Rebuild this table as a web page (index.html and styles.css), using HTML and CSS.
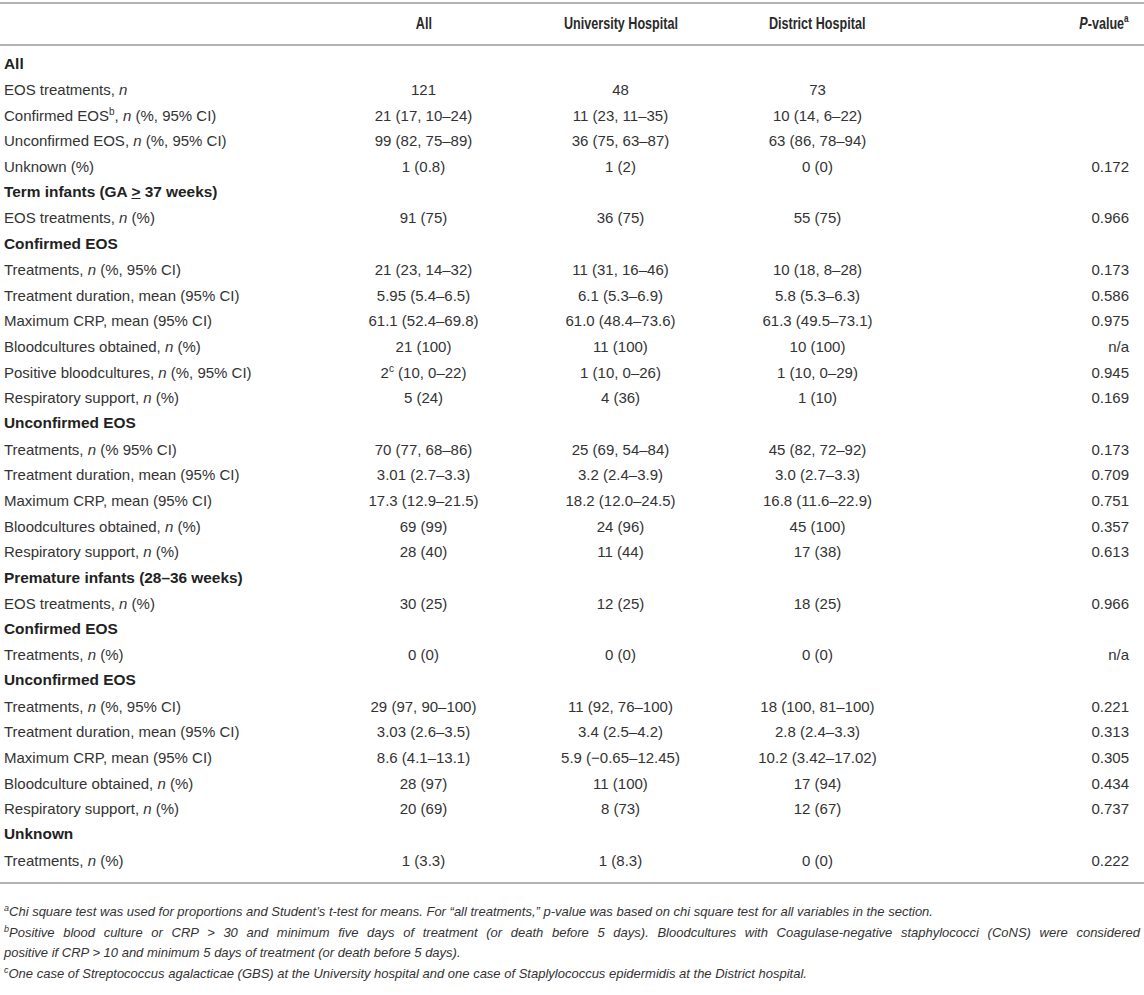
FILE: index.html
```html
<!DOCTYPE html>
<html>
<head>
<meta charset="utf-8">
<link rel="stylesheet" href="styles.css">
</head>
<body>
<div class="page">
<table class="data">
<colgroup>
<col class="c-label"><col class="c-num"><col class="c-num"><col class="c-num"><col class="c-p">
</colgroup>
<thead>
<tr><th></th><th><span class="hd">All</span></th><th><span class="hd">University Hospital</span></th><th><span class="hd">District Hospital</span></th><th class="p"><span class="hd hd-r"><i>P</i>-value<sup>a</sup></span></th></tr>
</thead>
<tbody>
<tr class="sec first"><td>All</td><td></td><td></td><td></td><td></td></tr>
<tr><td>EOS treatments, <i>n</i></td><td>121</td><td>48</td><td>73</td><td class="p"></td></tr>
<tr><td>Confirmed EOS<sup>b</sup>, <i>n</i> (%, 95% CI)</td><td>21 (17, 10–24)</td><td>11 (23, 11–35)</td><td>10 (14, 6–22)</td><td class="p"></td></tr>
<tr><td>Unconfirmed EOS, <i>n</i> (%, 95% CI)</td><td>99 (82, 75–89)</td><td>36 (75, 63–87)</td><td>63 (86, 78–94)</td><td class="p"></td></tr>
<tr><td>Unknown (%)</td><td>1 (0.8)</td><td>1 (2)</td><td>0 (0)</td><td class="p">0.172</td></tr>
<tr class="sec"><td>Term infants (GA <u>&gt;</u> 37 weeks)</td><td></td><td></td><td></td><td></td></tr>
<tr><td>EOS treatments, <i>n</i> (%)</td><td>91 (75)</td><td>36 (75)</td><td>55 (75)</td><td class="p">0.966</td></tr>
<tr class="sec"><td>Confirmed EOS</td><td></td><td></td><td></td><td></td></tr>
<tr><td>Treatments, <i>n</i> (%, 95% CI)</td><td>21 (23, 14–32)</td><td>11 (31, 16–46)</td><td>10 (18, 8–28)</td><td class="p">0.173</td></tr>
<tr><td>Treatment duration, mean (95% CI)</td><td>5.95 (5.4–6.5)</td><td>6.1 (5.3–6.9)</td><td>5.8 (5.3–6.3)</td><td class="p">0.586</td></tr>
<tr><td>Maximum CRP, mean (95% CI)</td><td>61.1 (52.4–69.8)</td><td>61.0 (48.4–73.6)</td><td>61.3 (49.5–73.1)</td><td class="p">0.975</td></tr>
<tr><td>Bloodcultures obtained, <i>n</i> (%)</td><td>21 (100)</td><td>11 (100)</td><td>10 (100)</td><td class="p">n/a</td></tr>
<tr><td>Positive bloodcultures, <i>n</i> (%, 95% CI)</td><td>2<sup>c</sup> (10, 0–22)</td><td>1 (10, 0–26)</td><td>1 (10, 0–29)</td><td class="p">0.945</td></tr>
<tr><td>Respiratory support, <i>n</i> (%)</td><td>5 (24)</td><td>4 (36)</td><td>1 (10)</td><td class="p">0.169</td></tr>
<tr class="sec"><td>Unconfirmed EOS</td><td></td><td></td><td></td><td></td></tr>
<tr><td>Treatments, <i>n</i> (% 95% CI)</td><td>70 (77, 68–86)</td><td>25 (69, 54–84)</td><td>45 (82, 72–92)</td><td class="p">0.173</td></tr>
<tr><td>Treatment duration, mean (95% CI)</td><td>3.01 (2.7–3.3)</td><td>3.2 (2.4–3.9)</td><td>3.0 (2.7–3.3)</td><td class="p">0.709</td></tr>
<tr><td>Maximum CRP, mean (95% CI)</td><td>17.3 (12.9–21.5)</td><td>18.2 (12.0–24.5)</td><td>16.8 (11.6–22.9)</td><td class="p">0.751</td></tr>
<tr><td>Bloodcultures obtained, <i>n</i> (%)</td><td>69 (99)</td><td>24 (96)</td><td>45 (100)</td><td class="p">0.357</td></tr>
<tr><td>Respiratory support, <i>n</i> (%)</td><td>28 (40)</td><td>11 (44)</td><td>17 (38)</td><td class="p">0.613</td></tr>
<tr class="sec"><td>Premature infants (28–36 weeks)</td><td></td><td></td><td></td><td></td></tr>
<tr><td>EOS treatments, <i>n</i> (%)</td><td>30 (25)</td><td>12 (25)</td><td>18 (25)</td><td class="p">0.966</td></tr>
<tr class="sec"><td>Confirmed EOS</td><td></td><td></td><td></td><td></td></tr>
<tr><td>Treatments, <i>n</i> (%)</td><td>0 (0)</td><td>0 (0)</td><td>0 (0)</td><td class="p">n/a</td></tr>
<tr class="sec"><td>Unconfirmed EOS</td><td></td><td></td><td></td><td></td></tr>
<tr><td>Treatments, <i>n</i> (%, 95% CI)</td><td>29 (97, 90–100)</td><td>11 (92, 76–100)</td><td>18 (100, 81–100)</td><td class="p">0.221</td></tr>
<tr><td>Treatment duration, mean (95% CI)</td><td>3.03 (2.6–3.5)</td><td>3.4 (2.5–4.2)</td><td>2.8 (2.4–3.3)</td><td class="p">0.313</td></tr>
<tr><td>Maximum CRP, mean (95% CI)</td><td>8.6 (4.1–13.1)</td><td>5.9 (−0.65–12.45)</td><td>10.2 (3.42–17.02)</td><td class="p">0.305</td></tr>
<tr><td>Bloodculture obtained, <i>n</i> (%)</td><td>28 (97)</td><td>11 (100)</td><td>17 (94)</td><td class="p">0.434</td></tr>
<tr><td>Respiratory support, <i>n</i> (%)</td><td>20 (69)</td><td>8 (73)</td><td>12 (67)</td><td class="p">0.737</td></tr>
<tr class="sec"><td>Unknown</td><td></td><td></td><td></td><td></td></tr>
<tr class="last"><td>Treatments, <i>n</i> (%)</td><td>1 (3.3)</td><td>1 (8.3)</td><td>0 (0)</td><td class="p">0.222</td></tr>
</tbody>
</table>
<div class="notes">
<p><sup>a</sup>Chi square test was used for proportions and Student’s t-test for means. For “all treatments,” p-value was based on chi square test for all variables in the section.</p>
<p><span class="just"><sup>b</sup>Positive blood culture or CRP &gt; 30 and minimum five days of treatment (or death before 5 days). Bloodcultures with Coagulase-negative staphylococci (CoNS) were considered</span>positive if CRP &gt; 10 and minimum 5 days of treatment (or death before 5 days).</p>
<p><sup>c</sup>One case of Streptococcus agalacticae (GBS) at the University hospital and one case of Staplylococcus epidermidis at the District hospital.</p>
</div>
</div>
</body>
</html>
```
FILE: styles.css
```css
html, body {
  margin: 0;
  padding: 0;
  background: #ffffff;
}
.page {
  padding-top: 2px;
  color: #333333;
  font-family: "Liberation Sans", Arial, sans-serif;
  font-size: 15px;
}
.data {
  width: 1144px;
  border-collapse: collapse;
  table-layout: fixed;
}
.c-label { width: 325px; }
.c-num { width: 197px; }
.c-p { width: 228px; }
.data thead th {
  height: 40px;
  padding: 0;
  border-top: 2px solid #b3b3b3;
  border-bottom: 2px solid #b3b3b3;
  font-family: "Liberation Sans", Arial, sans-serif;
  font-weight: bold;
  font-size: 17px;
  text-align: center;
  color: #2a2a2a;
  white-space: nowrap;
}
.hd {
  display: inline-block;
  transform: scaleX(0.74);
  transform-origin: center;
}
.hd-r {
  transform-origin: right center;
}
.data th.p, .data td.p {
  text-align: right;
  padding-right: 15px;
}
.data sup {
  font-size: 10px;
  line-height: 0;
  vertical-align: 6px;
}
.data thead sup {
  font-size: 11px;
  vertical-align: 7px;
}
.data td {
  height: 25.7px;
  padding: 0;
  text-align: center;
  white-space: nowrap;
}
.data td:first-child {
  text-align: left;
  padding-left: 4px;
}
.data tr.sec td:first-child {
  font-weight: bold;
  font-size: 15.4px;
  color: #222222;
}
.data tr.first td {
  padding-top: 5px;
}
.data tr.last td {
  padding-bottom: 9px;
  border-bottom: 2px solid #b3b3b3;
}
.notes {
  padding: 18px 4px 0 4px;
  font-style: italic;
  font-size: 13px;
  line-height: 20.7px;
}
.notes p {
  margin: 0;
}
.just {
  display: block;
  text-align: justify;
  text-align-last: justify;
}
.notes sup {
  font-size: 9px;
  line-height: 0;
  vertical-align: 5px;
}
```
